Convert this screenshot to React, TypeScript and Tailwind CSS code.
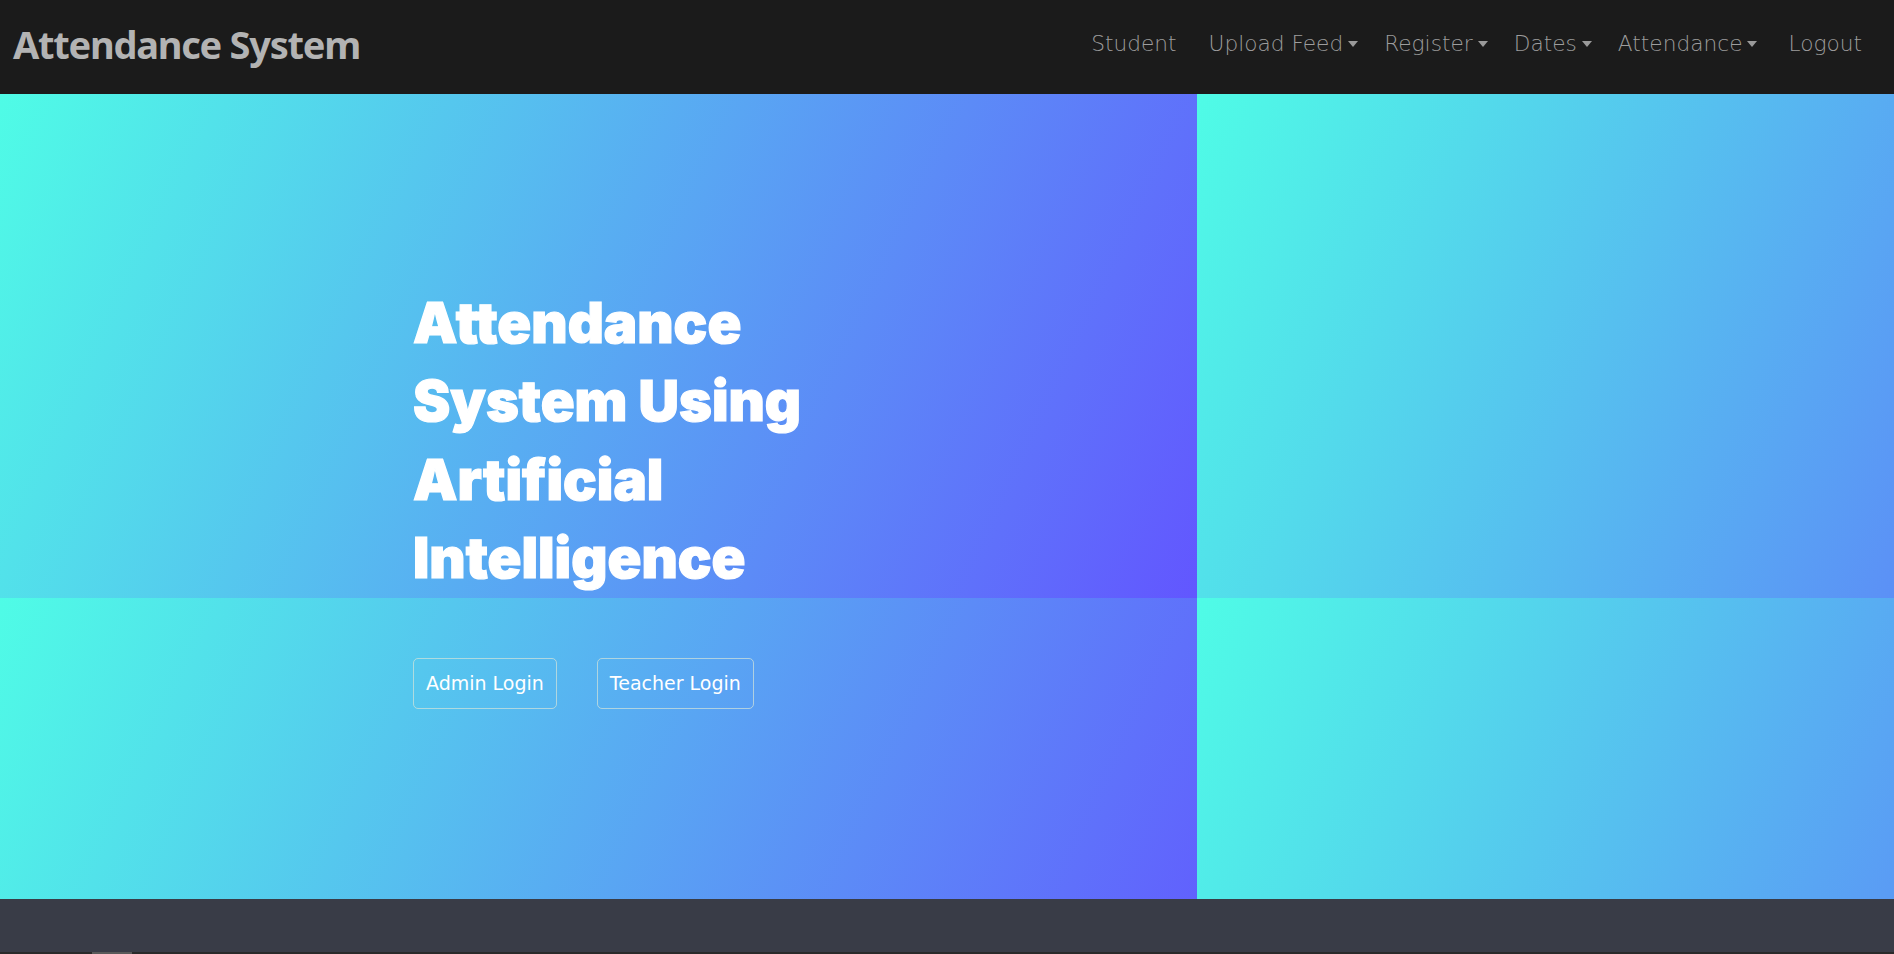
import React from "react";

const navFont = { fontFamily: '"DejaVu Sans", "Open Sans", sans-serif' };

function Caret() {
  return (
    <span className="ml-[5px] inline-block h-0 w-0 border-x-[5px] border-t-[6px] border-x-transparent border-t-[#9a9a9a] align-[4px]" />
  );
}

function NavItem({ label, dropdown = false, className = "" }: { label: string; dropdown?: boolean; className?: string }) {
  return (
    <a href="#" className={`flex items-center whitespace-nowrap text-[#9d9d9d] ${className}`}>
      {label}
      {dropdown ? <Caret /> : null}
    </a>
  );
}

export default function App() {
  return (
    <div className="flex min-h-[954px] w-full flex-col">
      <nav className="flex h-[94px] items-center justify-between bg-[#1b1b1b] pl-[13px] pr-[32px]">
        <a
          href="#"
          className="mb-[5px] text-[38px] font-bold tracking-[-1.25px] text-[#b3b3b3]"
          style={{ fontFamily: '"Noto Sans", "Open Sans", sans-serif' }}
        >
          Attendance System
        </a>
        <div className="mb-[5px] flex items-center text-[21.7px] font-light" style={navFont}>
          <NavItem label="Student" />
          <NavItem label="Upload Feed" dropdown className="ml-[32px]" />
          <NavItem label="Register" dropdown className="ml-[26px]" />
          <NavItem label="Dates" dropdown className="ml-[26px]" />
          <NavItem label="Attendance" dropdown className="ml-[26px]" />
          <NavItem label="Logout" className="ml-[31px]" />
        </div>
      </nav>

      <section className="h-[805px] bg-[#4ffbe6] bg-linear-[115deg] from-[#4ffce6] to-[#6256ff] bg-[length:1197px_504px] bg-repeat">
        <div className="pl-[413px] pt-[190px]">
          <h1
            className="text-[56px] leading-[78.4px] font-black text-white [-webkit-text-stroke:1.2px_white]"
            style={{ fontFamily: 'Inter, "DejaVu Sans", sans-serif' }}
          >
            Attendance
            <br />
            System Using
            <br />
            Artificial
            <br />
            Intelligence
          </h1>
          <div className="mt-[60px] flex gap-[40px]" style={{ fontFamily: '"DejaVu Sans", "Open Sans", sans-serif' }}>
            <button
              type="button"
              className="h-[51px] rounded-[5px] border border-[#d4e4d8]/70 px-[12px] text-[19px] text-white"
            >
              Admin Login
            </button>
            <button
              type="button"
              className="h-[51px] rounded-[5px] border border-[#d4e4d8]/70 px-[12px] text-[19px] text-white"
            >
              Teacher Login
            </button>
          </div>
        </div>
      </section>

      <footer className="flex h-[55px] flex-col justify-end bg-[#393c47]">
        <div className="flex h-[2px] bg-[#2a2a2a]">
          <div className="ml-[92px] w-[40px] bg-[#5a5a5a]" />
        </div>
      </footer>
    </div>
  );
}
